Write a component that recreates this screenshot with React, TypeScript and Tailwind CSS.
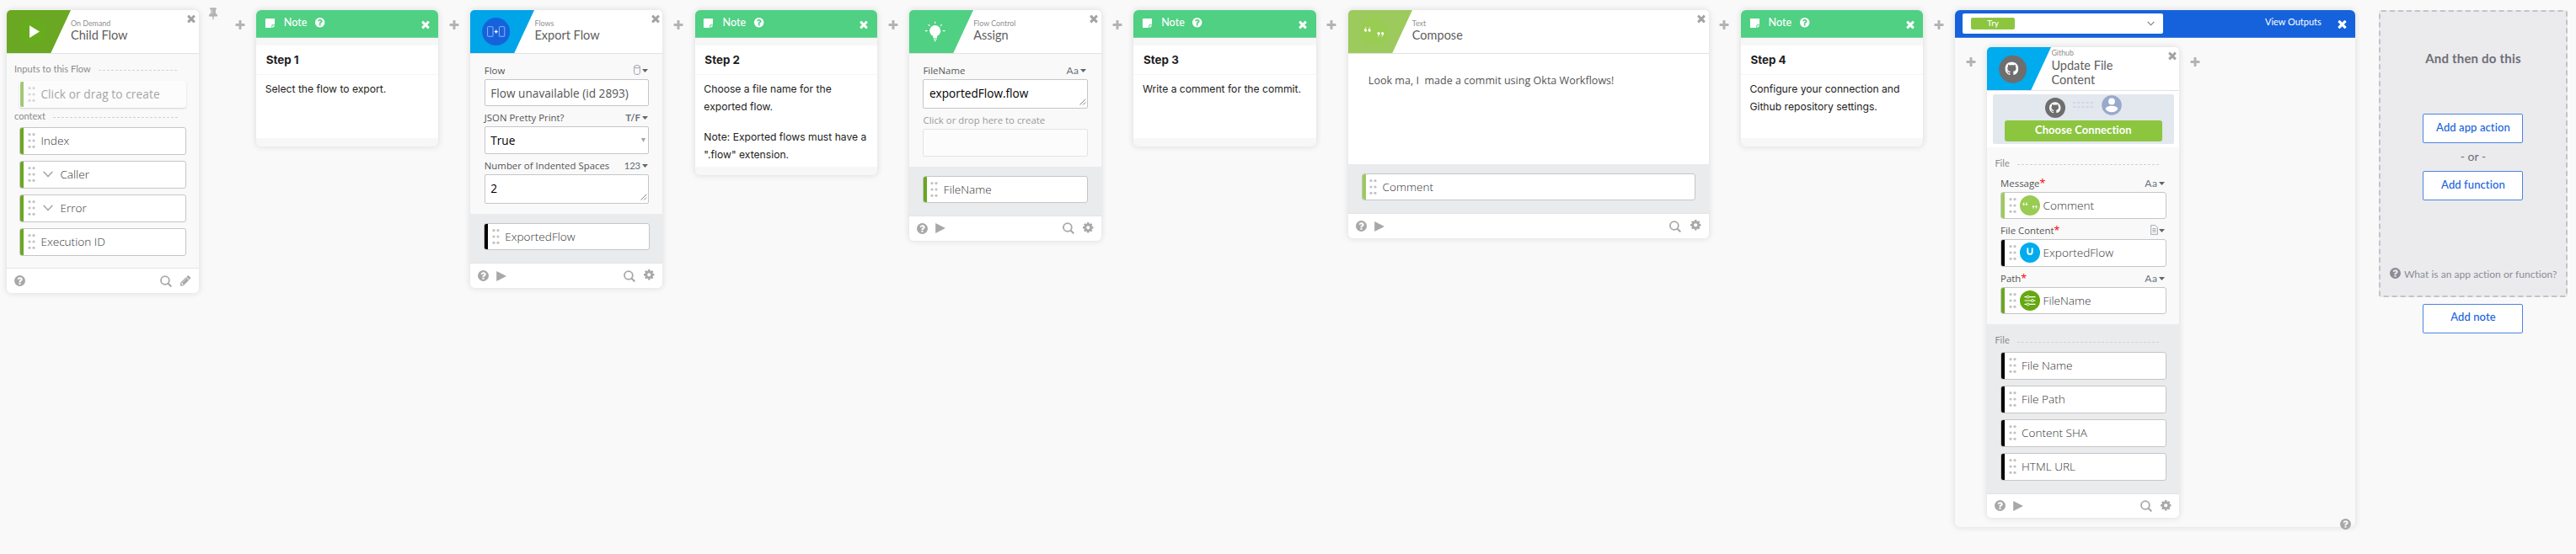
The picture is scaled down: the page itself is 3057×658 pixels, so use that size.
import React from "react";
import type { ReactNode } from "react";
import { SiGithub } from "react-icons/si";

const PATHS = {
  times:
    "M1490 1322q0 40-28 68l-136 136q-28 28-68 28t-68-28l-294-294-294 294q-28 28-68 28t-68-28l-136-136q-28-28-28-68t28-68l294-294-294-294q-28-28-28-68t28-68l136-136q28-28 68-28t68 28l294 294 294-294q28-28 68-28t68 28l136 136q28 28 28 68t-28 68l-294 294 294 294q28 28 28 68z",
  plus: "M1600 736v192q0 40-28 68t-68 28h-416v416q0 40-28 68t-68 28h-192q-40 0-68-28t-28-68v-416h-416q-40 0-68-28t-28-68v-192q0-40 28-68t68-28h416v-416q0-40 28-68t68-28h192q40 0 68 28t28 68v416h416q40 0 68 28t28 68z",
  help: "M1024 1376v-192q0-14-9-23t-23-9h-192q-14 0-23 9t-9 23v192q0 14 9 23t23 9h192q14 0 23-9t9-23zm256-672q0-88-55.5-163t-138.5-116-170-41q-243 0-371 213-15 24 8 42l132 100q7 6 19 6 16 0 25-12 53-68 86-92 34-24 86-24 48 0 85.5 26t37.5 59q0 38-20 61t-68 45q-63 28-115.5 86.5t-52.5 125.5v36q0 14 9 23t23 9h192q14 0 23-9t9-23q0-19 21.5-49.5t54.5-49.5q32-18 49-28.5t46-35 44.5-48 28-60.5 12.5-81zm384 192q0 209-103 385.5t-279.5 279.5-385.5 103-385.5-103-279.5-279.5-103-385.5 103-385.5 279.5-279.5 385.5-103 385.5 103 279.5 279.5 103 385.5z",
  cog: "M1152 896q0-106-75-181t-181-75-181 75-75 181 75 181 181 75 181-75 75-181zm512-109v222q0 12-8 23t-20 13l-185 28q-19 54-39 91 35 50 107 138 10 12 10 25t-9 23q-27 37-99 108t-94 71q-12 0-26-9l-138-108q-44 23-91 38-16 136-29 186-7 28-36 28h-222q-14 0-24.5-8.5t-11.5-21.5l-28-184q-49-16-90-37l-141 107q-10 9-25 9-14 0-25-11-126-114-165-168-7-10-7-23 0-12 8-23 15-21 51-66.5t54-70.5q-27-50-41-99l-183-27q-13-2-21-12.5t-8-23.5v-222q0-12 8-23t19-13l186-28q14-46 39-92-40-57-107-138-10-12-10-24 0-10 9-23 26-36 98.5-107.5t94.5-71.5q13 0 26 10l138 107q44-23 91-38 16-136 29-186 7-28 36-28h222q14 0 24.5 8.5t11.5 21.5l28 184q49 16 90 37l142-107q9-9 24-9 13 0 25 10 129 119 165 170 7 8 7 22 0 12-8 23-15 21-51 66.5t-54 70.5q26 50 41 98l183 28q13 2 21 12.5t8 23.5z",
  pencil:
    "M491 1536l91-91-235-235-91 91v107h128v128h107zm523-928q0-22-22-22-10 0-17 7l-542 542q-7 7-7 17 0 22 22 22 10 0 17-7l542-542q7-7 7-17zm-54-192l416 416-832 832h-416v-416zm683 96q0 53-37 90l-166 166-416-416 166-165q36-38 90-38 53 0 91 38l235 234q37 39 37 91z",
  pin: "M800 864v-448q0-14-9-23t-23-9-23 9-9 23v448q0 14 9 23t23 9 23-9 9-23zm672 352q0 26-19 45t-45 19h-429l-51 483q-2 12-10.5 20.5t-20.5 8.5h-1q-27 0-32-27l-76-485h-404q-26 0-45-19t-19-45q0-123 78.5-221.5t177.5-98.5v-512q-52 0-90-38t-38-90 38-90 90-38h640q52 0 90 38t38 90-38 90-90 38v512q99 0 177.5 98.5t78.5 221.5z",
  note: "M1152 1248v416h-928q-40 0-68-28t-28-68v-1344q0-40 28-68t68-28h1344q40 0 68 28t28 68v928h-416q-40 0-68 28t-28 68zm128 32h381q-15 82-65 132l-184 184q-50 50-132 65v-381z",
};

function Icon({ name, className }: { name: keyof typeof PATHS; className: string }) {
  return (
    <svg viewBox="0 0 1792 1792" fill="currentColor" className={`block shrink-0 ${className}`}>
      <path d={PATHS[name]} />
    </svg>
  );
}

const SHADOW = "shadow-[0_0_7px_1px_rgba(0,0,0,0.10)]";

function Connector() {
  return (
    <div className="flex w-[38.2px] shrink-0 justify-center pt-[11.7px] text-[#b3b3b3]">
      <Icon name="plus" className="mr-px size-[14px]" />
    </div>
  );
}

function Badge({ color, children }: { color: string; children: ReactNode }) {
  return (
    <svg viewBox="0 0 76 51" className="block h-[51px] w-[76px] shrink-0" fill="none">
      <path d="M0 0H76L52.3 51H0Z" fill={color} />
      {children}
    </svg>
  );
}

const PlayBadge = (
  <Badge color="#6aa722">
    <circle cx="30.7" cy="25.7" r="16.5" fill="#67ac1e" />
    <path d="M27 18.3L39 25.6L27 33Z" fill="#fff" />
  </Badge>
);

const FlowsBadge = (
  <Badge color="#00a4e8">
    <circle cx="30.6" cy="25.6" r="16.5" fill="#1662dd" />
    <rect x="20.6" y="19.7" width="6.4" height="11.6" rx="0.8" stroke="#9ec0f2" strokeWidth="0.9" />
    <rect x="34.4" y="19.7" width="6.4" height="11.6" rx="0.8" stroke="#9ec0f2" strokeWidth="0.9" />
    <path d="M30.7 23.6v4M28.7 25.6h4" stroke="#fff" strokeWidth="1.3" />
  </Badge>
);

const BulbBadge = (
  <Badge color="#4fd083">
    <circle cx="30.7" cy="24.6" r="6.6" fill="#fff" />
    <path d="M28.3 29h4.8v4h-4.8z" fill="#fff" />
    <path d="M28.9 34.4h3.8M29.4 36.5h2.6" stroke="#fff" strokeWidth="1.2" />
    <path
      d="M30.7 14v1.6M22.9 17.4l1.3 1.3M38.5 17.4l-1.3 1.3M19.2 24.6h2M40.2 24.6h2"
      stroke="#fff"
      strokeWidth="1.1"
      strokeLinecap="round"
    />
  </Badge>
);

function Quotes({ x, y, flip }: { x: number; y: number; flip?: boolean }) {
  return (
    <g transform={`translate(${x} ${y}) ${flip ? "rotate(180)" : ""}`} fill="#fff">
      <circle cx="-2.3" cy="1.1" r="1.55" />
      <circle cx="2.3" cy="1.1" r="1.55" />
      <path d="M-3.3 1.2q0-3 2-3.9M1.3 1.2q0-3 2-3.9" stroke="#fff" strokeWidth="1" fill="none" />
    </g>
  );
}

const TextBadge = (
  <Badge color="#9cca5c">
    <circle cx="30.7" cy="25.7" r="16.5" fill="#99cc52" />
    <Quotes x={22.9} y={23} />
    <Quotes x={38.3} y={28.7} flip />
  </Badge>
);

const GithubBadge = (
  <Badge color="#00abee">
    <circle cx="30.7" cy="26.3" r="16.5" fill="#6e6e6e" />
    <SiGithub x="21.4" y="17.2" width="18.6" height="18.6" color="#fff" />
  </Badge>
);

function CardHeader({
  badge,
  kicker,
  title,
  tall,
}: {
  badge: ReactNode;
  kicker: string;
  title: string;
  tall?: boolean;
}) {
  return (
    <div className="flex h-[52px] items-start overflow-hidden rounded-t-[5px] border-b border-[#e2e2e2] bg-white font-['Lato',sans-serif]">
      {badge}
      <div className={`w-[104px] grow ${tall ? "pt-[2.5px]" : "pt-[11px]"}`}>
        <div className="text-[8.9px] leading-[10px] text-[#8f8f8f]">{kicker}</div>
        <div className="mt-[0.6px] max-w-[104px] text-[14.5px] leading-[17px] text-[#5e5e5e]">{title}</div>
      </div>
      <Icon name="times" className="mt-[3px] mr-[1.8px] size-[14px] text-[#a3a3a3]" />
    </div>
  );
}

function CardFooter({ pencil }: { pencil?: boolean }) {
  return (
    <div className="flex h-[29.5px] items-center rounded-b-[6px] border-t border-[#e4e4e4] bg-white pr-[8.5px] pl-[8px] text-[#a8a8a8]">
      <Icon name="help" className="size-[15px]" />
      {!pencil && (
        <svg viewBox="0 0 12 12" className="ml-[8px] size-[12px]" fill="currentColor">
          <path d="M0.2 0L12 6L0.2 12Z" />
        </svg>
      )}
      <span className="grow" />
      <svg viewBox="0 0 14 14" className="mr-[9.5px] size-[14px]" fill="none" stroke="currentColor" strokeLinecap="round">
        <circle cx="5.9" cy="6" r="4.9" strokeWidth="1.8" />
        <path d="M9.8 9.9L12.7 12.8" strokeWidth="2.1" />
      </svg>
      {pencil ? (
        <Icon name="pencil" className="size-[14.5px]" />
      ) : (
        <Icon name="cog" className="mb-[2px] size-[14.5px]" />
      )}
    </div>
  );
}

const BAR = {
  green: "bg-[#6aa722]",
  lime: "bg-[#9cca5c]",
  black: "bg-black",
};

function Pill({
  label,
  bar,
  expandable,
  icon,
  placeholder,
}: {
  label: string;
  bar: keyof typeof BAR;
  expandable?: boolean;
  icon?: ReactNode;
  placeholder?: boolean;
}) {
  return (
    <div
      className={`flex h-[32.5px] items-center overflow-hidden rounded-[3px] border bg-white font-['Open_Sans',sans-serif] text-[13.6px] ${
        placeholder
          ? "border-transparent opacity-60 shadow-[0_1px_2px_rgba(0,0,0,0.25)] text-[#6c6c6c] tracking-[0.12px]"
          : "border-[#c6c6c6] font-light text-[#333]"
      }`}
    >
      <span className={`h-full w-[4px] shrink-0 ${BAR[bar]}`} />
      <svg viewBox="0 0 9 18" className={`h-[18px] w-[9px] shrink-0 ${icon ? "ml-[5px]" : "ml-[4.5px]"}`} fill="#c2c2c2">
        {[1.7, 9, 16.3].map((y) => (
          <g key={y}>
            <circle cx="2" cy={y} r="1.6" />
            <circle cx="7" cy={y} r="1.6" />
          </g>
        ))}
      </svg>
      {icon && <span className="ml-[3.5px] shrink-0">{icon}</span>}
      {expandable && (
        <svg viewBox="0 0 12 8" className="ml-[9.5px] h-[8px] w-[12px] shrink-0" fill="none">
          <path d="M0.6 0.8L6 6.6L11.4 0.8" stroke="#a8a8a8" strokeWidth="1.5" />
        </svg>
      )}
      <span className={`whitespace-nowrap ${icon ? "ml-[4px]" : expandable ? "ml-[8px]" : "ml-[6.5px]"}`}>{label}</span>
    </div>
  );
}

function SectionLabel({ children }: { children: ReactNode }) {
  return (
    <div className="flex items-center pr-[24.5px] pl-[9px] font-['Lato',sans-serif] text-[11px] leading-[16px] tracking-[0.05px] text-[#8c8c8c]">
      <span>{children}</span>
      <svg className="mt-[4px] ml-[9.5px] h-px w-0 grow" preserveAspectRatio="none">
        <path d="M0 0.5H400" stroke="#d2d2d2" strokeDasharray="3 2" />
      </svg>
    </div>
  );
}

function Caret() {
  return (
    <svg viewBox="0 0 7 4" className="h-[4px] w-[7px]" fill="#5f656c">
      <path d="M0 0H7L3.5 4Z" />
    </svg>
  );
}

const AA = <span className="text-[12px] tracking-[0.6px]">Aa</span>;

function FieldLabel({ label, type, required }: { label: string; type: ReactNode; required?: boolean }) {
  return (
    <div className="flex h-[24px] items-center pt-[4px] font-['Open_Sans',sans-serif] text-[11.4px] leading-[20px] text-[#555]">
      <span className="whitespace-nowrap">
        {label}
        {required && <span className="text-[12.5px] leading-[10px] font-medium text-[#f00]">*</span>}
      </span>
      <span className="mr-[1.7px] ml-auto flex items-center gap-[1.5px] font-['Lato',sans-serif] text-[#69727c]">
        {type}
        <Caret />
      </span>
    </div>
  );
}

function Resizer() {
  return (
    <svg viewBox="0 0 8 8" className="mt-auto mr-px mb-[3px] ml-auto size-[8px] shrink-0">
      <path d="M0.5 7.5L7.2 0.8M4.2 7.5L7.2 4.5" stroke="#666" strokeWidth="0.8" />
    </svg>
  );
}

function Field({ value, kind }: { value: string; kind?: "select" | "area" | "empty" | "flow" }) {
  const tone =
    kind === "empty"
      ? "h-[32.2px] border-[#e4e4e4] bg-[#fcfcfc]"
      : kind === "area"
        ? "h-[35.3px] border-[#c6c6c6] bg-white"
        : "h-[32.2px] border-[#c6c6c6] bg-white";
  return (
    <div
      className={`flex rounded-[2px] border pl-[6.5px] font-['Open_Sans',sans-serif] text-[13.65px] leading-[31px] ${tone} ${
        kind === "flow" ? "text-[#555]" : "text-black"
      }`}
    >
      <span className="whitespace-nowrap">{value}</span>
      {kind === "area" && <Resizer />}
      {kind === "select" && (
        <svg viewBox="0 0 5 5" className="mt-[13px] mr-[3.5px] ml-auto size-[5px]" fill="#a3a3a3">
          <path d="M0 0H5L2.5 5Z" />
        </svg>
      )}
    </div>
  );
}

function Outputs({ children }: { children: ReactNode }) {
  return <div className="bg-[#eaebed] px-[15.7px] pt-[11px] pb-[15px]">{children}</div>;
}

function NoteCard({ title, children }: { title: string; children: ReactNode }) {
  return (
    <section className={`w-[216.3px] shrink-0 overflow-hidden rounded-[6px] bg-[#f7f7f7] pb-[10px] ${SHADOW}`}>
      <header className="flex h-[33px] items-start border-b border-[#6fd898] bg-[#4fd083] text-white">
        <Icon name="note" className="mt-[9px] ml-[9.8px] size-[13px]" />
        <span className="ml-[10px] pt-[6px] font-['Lato',sans-serif] text-[12.6px] leading-[18px] font-medium">Note</span>
        <Icon name="help" className="mt-[8px] ml-[8.6px] size-[13.4px]" />
        <Icon name="times" className="mt-[10px] mr-[8.5px] ml-auto size-[14px]" />
      </header>
      <h3 className="mt-[9px] border-b border-[#f6f6f6] bg-white pl-[11.7px] font-['Inter',sans-serif] text-[13.4px] leading-[34.5px] font-bold text-[#1d1d21]">
        {title}
      </h3>
      <div className="flex min-h-[74.5px] flex-col gap-[15px] bg-white pt-[5.5px] pr-[8px] pb-[4px] pl-[10.7px] font-['Inter',sans-serif] text-[12.15px] leading-[21px] text-[#1d1d21]">
        {children}
      </div>
    </section>
  );
}

function ChildFlowCard() {
  return (
    <section className={`w-[228px] shrink-0 rounded-[6px] ${SHADOW}`}>
      <CardHeader badge={PlayBadge} kicker="On Demand" title="Child Flow" />
      <div className="bg-[#f9f9f9] pt-[10px] pb-[14.8px]">
        <SectionLabel>Inputs to this Flow</SectionLabel>
        <div className="px-[15.4px] pt-[6px] pb-[1.5px]">
          <Pill placeholder bar="green" label="Click or drag to create" />
        </div>
        <SectionLabel>context</SectionLabel>
        <div className="flex flex-col gap-[7.5px] px-[15.4px] pt-[5.5px]">
          <Pill bar="green" label="Index" />
          <Pill bar="green" label="Caller" expandable />
          <Pill bar="green" label="Error" expandable />
          <Pill bar="green" label="Execution ID" />
        </div>
      </div>
      <CardFooter pencil />
    </section>
  );
}

function ExportFlowCard() {
  const cylinder = (
    <svg viewBox="0 0 8 12" className="mb-[2px] h-[12px] w-[8px]" fill="none" stroke="#9ba1a8" strokeWidth="1">
      <ellipse cx="4" cy="2.2" rx="3.4" ry="1.6" />
      <path d="M0.6 2.2V9.8C0.6 11.9 7.4 11.9 7.4 9.8V2.2" />
    </svg>
  );
  return (
    <section className={`w-[228px] shrink-0 rounded-[6px] ${SHADOW}`}>
      <CardHeader badge={FlowsBadge} kicker="Flows" title="Export Flow" />
      <div className="bg-[#f9f9f9] px-[16.3px] pt-[6.5px] pb-[12px]">
        <FieldLabel label="Flow" type={cylinder} />
        <Field kind="flow" value="Flow unavailable (id 2893)" />
        <FieldLabel label="JSON Pretty Print?" type={<span className="text-[11.4px] font-bold">T/F</span>} />
        <Field kind="select" value="True" />
        <FieldLabel
          label="Number of Indented Spaces"
          type={<span className="text-[11.2px] font-medium tracking-[-0.1px]">123</span>}
        />
        <Field kind="area" value="2" />
      </div>
      <Outputs>
        <Pill bar="black" label="ExportedFlow" />
      </Outputs>
      <CardFooter />
    </section>
  );
}

function AssignCard() {
  return (
    <section className={`w-[228px] shrink-0 rounded-[6px] ${SHADOW}`}>
      <CardHeader badge={BulbBadge} kicker="Flow Control" title="Assign" />
      <div className="bg-[#f9f9f9] px-[16.3px] pt-[6.5px] pb-[12px]">
        <FieldLabel label="FileName" type={AA} />
        <Field kind="area" value="exportedFlow.flow" />
        <div className="h-[24px] pt-[4px] font-['Open_Sans',sans-serif] text-[11.4px] leading-[20px] text-[#9a9a9a]">
          Click or drop here to create
        </div>
        <Field kind="empty" value="" />
      </div>
      <Outputs>
        <Pill bar="green" label="FileName" />
      </Outputs>
      <CardFooter />
    </section>
  );
}

function ComposeCard() {
  return (
    <section className={`w-[427.7px] shrink-0 rounded-[6px] ${SHADOW}`}>
      <CardHeader badge={TextBadge} kicker="Text" title="Compose" />
      <div className="h-[131.3px] bg-white pt-[22.5px] pl-[24px] font-['Open_Sans',sans-serif] text-[12.55px] leading-[20px] whitespace-pre text-[#555]">
        {"Look ma, I  made a commit using Okta Workflows!"}
      </div>
      <Outputs>
        <Pill bar="lime" label="Comment" />
      </Outputs>
      <CardFooter />
    </section>
  );
}

function UpdateFileCard() {
  const fileIcon = (
    <svg viewBox="0 0 9 12" className="mb-[2px] h-[12px] w-[9px]" fill="none" stroke="#9ba1a8" strokeWidth="0.9">
      <path d="M0.6 0.6H5.8L8.4 3.2V11.4H0.6Z" />
      <path d="M2.4 4.6H6.6M2.4 6.4H6.6M2.4 8.2H6.6" />
    </svg>
  );
  return (
    <section className={`w-[228px] shrink-0 rounded-[6px] ${SHADOW}`}>
      <CardHeader tall badge={GithubBadge} kicker="Github" title="Update File Content" />
      <div className="bg-white px-[6.7px] pt-[4px] pb-[4px]">
        <div className="flex h-[59px] flex-col items-center rounded-[2px] bg-[#e3e7ee]">
          <div className="flex h-[31.3px] items-center gap-[9.5px] pb-[5px]">
            <span className="mt-[5.5px] flex size-[24px] items-center justify-center rounded-full bg-[#6e6e6e] text-white">
              <SiGithub className="size-[13.5px]" />
            </span>
            <svg viewBox="0 0 24 7" className="h-[7px] w-[24px]" fill="none" stroke="#c0c9de" strokeWidth="1.2">
              <path d="M0 1H24M0 6H24" strokeDasharray="3.2 2" />
            </svg>
            <svg viewBox="0 0 24 24" className="size-[24px]">
              <circle cx="12" cy="12" r="11.8" fill="#98a9cb" />
              <circle cx="12" cy="7.4" r="3.9" fill="#fff" />
              <path d="M4.8 16.6C4.8 11.6 19.2 11.6 19.2 16.6C17 21.4 7 21.4 4.8 16.6Z" fill="#fff" />
            </svg>
          </div>
          <button className="h-[24.7px] w-[186.3px] rounded-[3px] bg-[#8cc63f] pb-[2px] text-center font-['Lato',sans-serif] text-[12.9px] leading-[22px] font-bold tracking-[0.13px] text-white">
            Choose Connection
          </button>
        </div>
      </div>
      <div className="bg-[#f9f9f9] pt-[11px] pb-[12px]">
        <SectionLabel>File</SectionLabel>
        <div className="px-[15.7px] pt-[2px]">
          <FieldLabel label="Message" required type={AA} />
          <Pill
            bar="lime"
            label="Comment"
            icon={
              <svg viewBox="0 0 24 24" className="size-[24px]">
                <circle cx="12" cy="12" r="12" fill="#99cc52" />
                <g transform="translate(12 12) scale(0.72) translate(-30.7 -25.7)">
                  <Quotes x={22.9} y={23} />
                  <Quotes x={38.5} y={28.7} flip />
                </g>
              </svg>
            }
          />
          <FieldLabel label="File Content" required type={fileIcon} />
          <Pill
            bar="black"
            label="ExportedFlow"
            icon={
              <svg viewBox="0 0 24 24" className="size-[24px]" fill="none">
                <circle cx="12" cy="12" r="12" fill="#00abee" />
                <path d="M9.3 6.6V11.2C9.3 14.8 14.7 14.8 14.7 11.2V6.6" stroke="#fff" strokeWidth="1.9" />
              </svg>
            }
          />
          <FieldLabel label="Path" required type={AA} />
          <Pill
            bar="green"
            label="FileName"
            icon={
              <svg viewBox="0 0 24 24" className="size-[24px]" fill="#66a80f" stroke="#fff">
                <circle cx="12" cy="12" r="12" stroke="none" />
                <path d="M5.5 7.6H18.5M5.5 12H18.5M5.5 16.4H18.5" strokeWidth="1.1" />
                <circle cx="9.6" cy="7.6" r="1.4" />
                <circle cx="14.8" cy="12" r="1.4" />
                <circle cx="9.6" cy="16.4" r="1.4" />
              </svg>
            }
          />
        </div>
      </div>
      <div className="bg-[#eaebed] pt-[11px] pb-[15px]">
        <SectionLabel>File</SectionLabel>
        <div className="flex flex-col gap-[7.5px] px-[15.7px] pt-[6px]">
          <Pill bar="black" label="File Name" />
          <Pill bar="black" label="File Path" />
          <Pill bar="black" label="Content SHA" />
          <Pill bar="black" label="HTML URL" />
        </div>
      </div>
      <CardFooter />
    </section>
  );
}

function TryBlock() {
  return (
    <section className={`flex h-[614.3px] w-[475px] shrink-0 flex-col rounded-[6px] bg-[#f9f9f9] ${SHADOW}`}>
      <header className="flex h-[33px] shrink-0 items-start rounded-t-[6px] border-b border-[#3c7be3] bg-[#1662dd] pt-[4.5px] text-white">
        <div className="ml-[9.3px] flex h-[24px] w-[238px] items-center rounded-[2px] bg-white">
          <span className="ml-[9.7px] h-[14px] w-[52px] rounded-[2px] bg-[#8cc63f] text-center font-['Lato',sans-serif] text-[10px] leading-[12px] font-medium">
            Try
          </span>
          <svg viewBox="0 0 9 6" className="mr-[10px] ml-auto h-[6px] w-[9px]" fill="none">
            <path d="M0.7 0.8L4.5 4.8L8.3 0.8" stroke="#777" strokeWidth="1.1" />
          </svg>
        </div>
        <span className="ml-auto font-['Lato',sans-serif] text-[11px] leading-[19px] tracking-[-0.02px]">View Outputs</span>
        <Icon name="times" className="mt-[4.5px] mr-[8px] ml-[17.5px] size-[15px]" />
      </header>
      <div className="flex shrink-0 items-start pt-[11px]">
        <Connector />
        <UpdateFileCard />
        <Connector />
      </div>
      <Icon name="help" className="mt-auto mr-[3.8px] mb-[5.8px] ml-auto size-[15px] text-[#a8a8a8]" />
    </section>
  );
}

function ActionButton({ children }: { children: ReactNode }) {
  return (
    <button className="h-[35px] w-[119px] rounded-[2px] border border-[#4a84e4] bg-white pb-[2px] font-['Lato',sans-serif] text-[13px] font-medium tracking-[0.1px] text-[#1662dd]">
      {children}
    </button>
  );
}

function NextStep() {
  return (
    <div className="ml-[28px] flex w-[223.5px] shrink-0 flex-col items-center font-['Lato',sans-serif]">
      <div className="flex h-[341px] w-full flex-col items-center rounded-[3px] border-2 border-dashed border-[#c4c4c6] bg-[#ebebed]">
        <h2 className="mt-[45px] text-[15px] leading-[20px] font-bold tracking-[0.2px] text-[#6e6e78]">And then do this</h2>
        <div className="mt-[56.5px] flex flex-col items-center">
          <ActionButton>Add app action</ActionButton>
          <div className="h-[33px] text-[14px] leading-[31px] text-[#6e6e78]">- or -</div>
          <ActionButton>Add function</ActionButton>
        </div>
        <div className="mt-[79px] flex items-center text-[12px] leading-[18px] tracking-[0.04px] whitespace-nowrap text-[#8c8c96]">
          <Icon name="help" className="mr-[2.5px] mb-[3px] size-[15px]" />
          What is an app action or function?
        </div>
      </div>
      <div className="mt-[8px]">
        <ActionButton>Add note</ActionButton>
      </div>
    </div>
  );
}

export default function App() {
  return (
    <main className="h-[658px] w-[3057px] overflow-hidden bg-[#f9f9f9]">
      <div className="flex items-start pt-[11.7px] pl-[8px]">
        <ChildFlowCard />
        <div className="-mt-[3.5px] flex w-[68px] shrink-0 items-start text-[#b3b3b3]">
          <Icon name="pin" className="ml-[8.5px] size-[16px]" />
          <Icon name="plus" className="mt-[14.7px] ml-[17px] size-[14px]" />
        </div>
        <NoteCard title="Step 1">
          <p>Select the flow to export.</p>
        </NoteCard>
        <Connector />
        <ExportFlowCard />
        <Connector />
        <NoteCard title="Step 2">
          <p>
            Choose a file name for the
            <br />
            exported flow.
          </p>
          <p>
            Note: Exported flows must have a
            <br />
            ".flow" extension.
          </p>
        </NoteCard>
        <Connector />
        <AssignCard />
        <Connector />
        <NoteCard title="Step 3">
          <p>Write a comment for the commit.</p>
        </NoteCard>
        <Connector />
        <ComposeCard />
        <Connector />
        <NoteCard title="Step 4">
          <p>
            Configure your connection and
            <br />
            Github repository settings.
          </p>
        </NoteCard>
        <Connector />
        <TryBlock />
        <NextStep />
      </div>
    </main>
  );
}
